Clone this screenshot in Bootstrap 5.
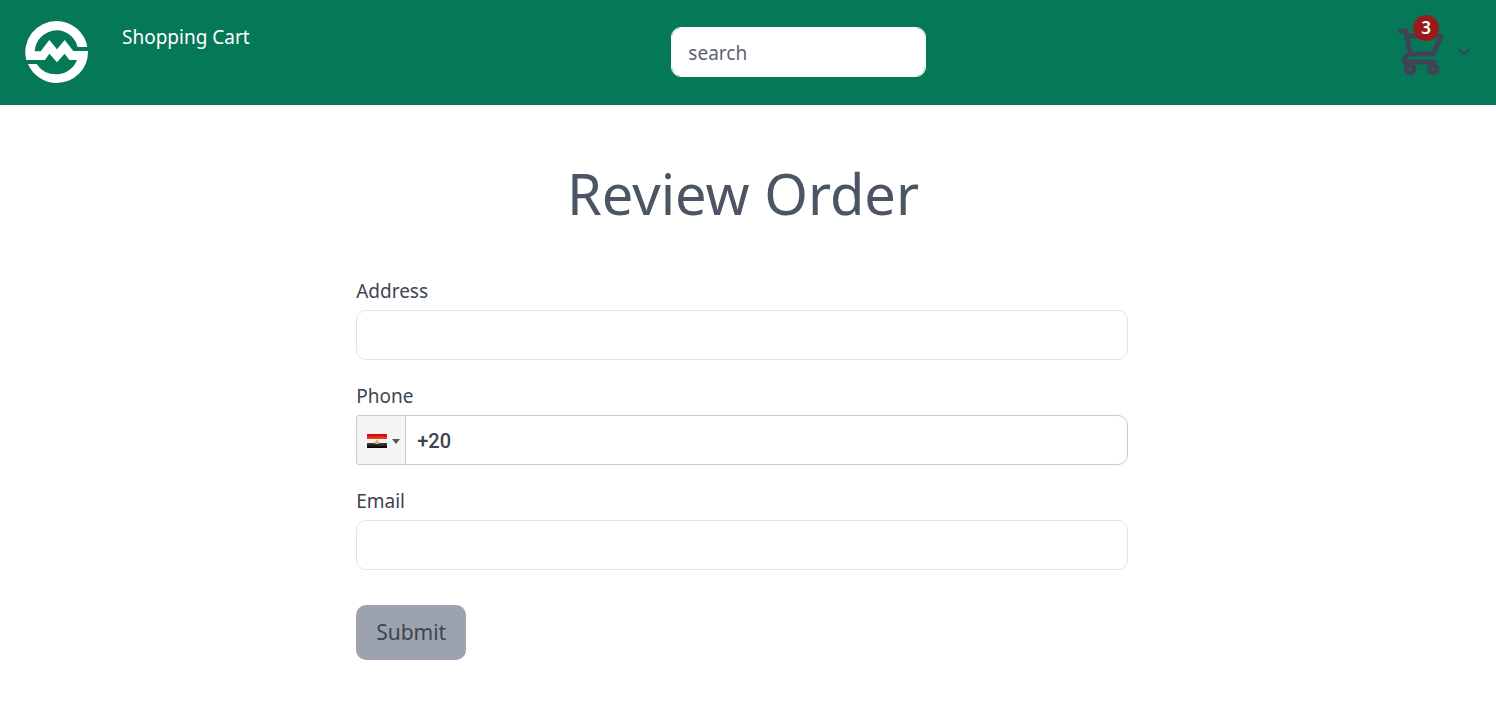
<!DOCTYPE html>
<html lang="en">
<head>
<meta charset="utf-8">
<meta name="viewport" content="width=device-width, initial-scale=1">
<title>Review Order</title>
<link href="https://cdn.jsdelivr.net/npm/bootstrap@5.3.0/dist/css/bootstrap.min.css" rel="stylesheet">
<style>
  body { font-family: "Noto Sans", sans-serif; font-size: 19px; line-height: 30px; color: #3d4451; }
  .site-bar { background: #057857; min-height: 105px; padding: 20px 24px 20px 25px; }
  .site-logo { width: 64px; height: 64px; }
  .site-title { margin-left: 33px; margin-top: 2px; color: #fff; }
  .search-box { width: 255px; margin-top: 7px; margin-right: 50px; }
  .field { height: 50px; border: 1px solid #e3e4e8; border-radius: 10px; font-size: 19px; color: #3d4451; padding: 2px 16px 0; }
  .search-box .field { border-color: #fff; }
  .field::placeholder { color: #5c6371; }
  .cart-count { top: -5px; left: 15px; width: 26px; height: 26px; background: #981b1b; color: #fff; font-size: 17px; line-height: 26px; }
  .page-title { font-size: 56px; line-height: 60px; margin: 58px 0 53px; color: #4b5563; }
  .order-form { width: 52%; min-width: 300px; max-width: 772px; }
  .form-wrap { padding-right: 12px; }
  .page-title { padding-right: 10px; }
  .field-label { line-height: 30px; margin-bottom: 4px; }
  .field-row { margin-bottom: 21px; }
  .country-btn { width: 50px; background: #f5f5f5; border: 1px solid #cacaca; border-radius: 3px 0 0 3px; padding: 2px 5px 0 10px; }
  .phone-field { font-family: Roboto, sans-serif; font-size: 20px; font-weight: 500; border-color: #cacaca; border-radius: 0 10px 10px 0; padding-left: 11px; }
  .submit-btn { width: 110px; height: 55px; margin-top: 14px; border: 0; border-radius: 10px; background: #9ca3af; color: #3d4451; font-size: 21px; }
</style>
</head>
<body>
<header class="site-bar d-flex justify-content-between align-items-start">
  <div class="d-flex align-items-start">
    <a href="#" aria-label="Home" class="d-block lh-1">
      <svg class="site-logo" viewBox="75 60 192 192" fill="#fff" aria-hidden="true">
        <path d="M79 180A94 93 0 0 1 170 63A94 93 0 0 1 262 141H233A66 66 0 0 0 170 91A66 66 0 0 0 104 154H122L148 120L171 148L194 120L220 153H264A94 93 0 0 1 170 249A94 93 0 0 1 84 192H110A70 68 0 0 0 170 223A67 67 0 0 0 231 180H208L194 161L171 187L148 161L135 180Z"/>
      </svg>
    </a>
    <a href="#" class="site-title text-decoration-none">Shopping Cart</a>
  </div>
  <form class="search-box" role="search">
    <input type="search" class="form-control field" placeholder="search" aria-label="search">
  </form>
  <button type="button" class="btn border-0 p-0 d-flex align-items-center position-relative" aria-label="Cart, 3 items">
    <svg width="48" height="64" viewBox="0 0 48 64" fill="none" stroke="#404355" stroke-width="5" stroke-linecap="round" stroke-linejoin="round" aria-hidden="true">
      <path d="M3 11H8L12 34M10 16H43L35 34H12Q4 38 7 42H36"/>
      <circle cx="12" cy="49" r="4"/><circle cx="35" cy="49" r="4"/>
    </svg>
    <span class="cart-count position-absolute rounded-circle fw-semibold">3</span>
    <svg class="ms-2" width="18" height="16" viewBox="0 0 18 16" fill="none" stroke="#404355" stroke-width="2" aria-hidden="true"><path d="M5 5L10 10L15 5"/></svg>
  </button>
</header>
<main class="text-center">
  <h1 class="page-title fw-normal">Review Order</h1>
  <div class="form-wrap">
    <form class="order-form mx-auto text-start">
      <div class="field-row">
        <label class="field-label d-block" for="address">Address</label>
        <input id="address" type="text" class="form-control field">
      </div>
      <div class="field-row">
        <label class="field-label d-block" for="phone">Phone</label>
        <div class="input-group flex-nowrap">
          <button type="button" class="country-btn d-flex align-items-center justify-content-between" aria-label="Country: Egypt">
            <svg width="20" height="14" viewBox="0 0 20 14" aria-hidden="true">
              <defs>
                <linearGradient id="red" x2="0" y2="1"><stop stop-color="#c00"/><stop offset="1" stop-color="#f4423c"/></linearGradient>
                <linearGradient id="black" x2="0" y2="1"><stop stop-color="#444"/><stop offset="1" stop-color="#000"/></linearGradient>
              </defs>
              <path fill="url(#red)" d="M0 0H20V5H0z"/><path fill="#f7f3ed" d="M0 5H20V9H0z"/><path fill="url(#black)" d="M0 9H20V14H0z"/>
              <path fill="#d5b35b" d="M10 5L11 7L13 9L11 10H9L7 9L9 7z"/>
            </svg>
            <svg width="8" height="5" viewBox="0 0 8 5" fill="#555" aria-hidden="true"><path d="M0 0H8L4 5z"/></svg>
          </button>
          <input id="phone" type="tel" class="form-control field phone-field" value="+20">
        </div>
      </div>
      <div class="field-row">
        <label class="field-label d-block" for="email">Email</label>
        <input id="email" type="email" class="form-control field">
      </div>
      <button type="submit" class="btn submit-btn p-0">Submit</button>
    </form>
  </div>
</main>
<script src="https://cdn.jsdelivr.net/npm/bootstrap@5.3.0/dist/js/bootstrap.bundle.min.js"></script>
</body>
</html>
